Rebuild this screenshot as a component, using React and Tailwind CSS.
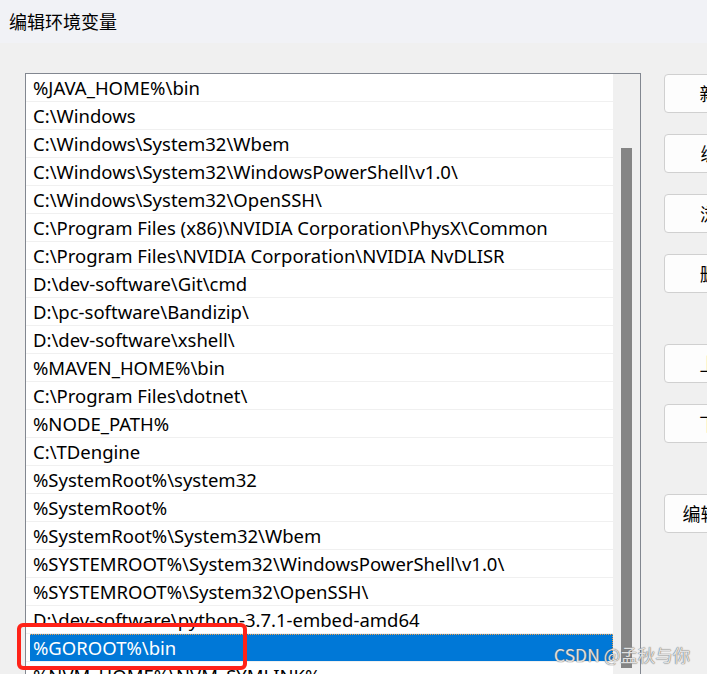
const paths = [
  '%JAVA_HOME%\\bin',
  'C:\\Windows',
  'C:\\Windows\\System32\\Wbem',
  'C:\\Windows\\System32\\WindowsPowerShell\\v1.0\\',
  'C:\\Windows\\System32\\OpenSSH\\',
  'C:\\Program Files (x86)\\NVIDIA Corporation\\PhysX\\Common',
  'C:\\Program Files\\NVIDIA Corporation\\NVIDIA NvDLISR',
  'D:\\dev-software\\Git\\cmd',
  'D:\\pc-software\\Bandizip\\',
  'D:\\dev-software\\xshell\\',
  '%MAVEN_HOME%\\bin',
  'C:\\Program Files\\dotnet\\',
  '%NODE_PATH%',
  'C:\\TDengine',
  '%SystemRoot%\\system32',
  '%SystemRoot%',
  '%SystemRoot%\\System32\\Wbem',
  '%SYSTEMROOT%\\System32\\WindowsPowerShell\\v1.0\\',
  '%SYSTEMROOT%\\System32\\OpenSSH\\',
  'D:\\dev-software\\python-3.7.1-embed-amd64',
  '%GOROOT%\\bin',
  '%NVM_HOME%\\NVM_SYMLINK%',
]

const buttons = [
  { label: '新建(N)', gap: '' },
  { label: '编辑(E)', gap: 'mt-[21px]' },
  { label: '浏览(B)', gap: 'mt-[21px]' },
  { label: '删除(D)', gap: 'mt-[21px]' },
  { label: '上移(U)', gap: 'mt-[51px]' },
  { label: '下移(O)', gap: 'mt-[21px]' },
  { label: '编辑文本(T)', gap: 'mt-[51px]' },
]

export default function App() {
  return (
    <div className="relative w-[707px] h-[674px] overflow-hidden bg-[#f0f0f0] font-['Noto_Sans','Noto_Sans_CJK_SC',sans-serif]">
      <div className="h-[43px] bg-[#f1f2f6] flex items-center pl-[9px] text-[18px] text-black font-['Noto_Sans_CJK_SC',sans-serif]">
        编辑环境变量
      </div>

      <div className="flex pt-[30px] pl-[25px]">
        <div className="w-[616px] h-[640px] shrink-0 border border-[#828790] bg-white flex">
          <div className="w-[587px] flex flex-col">
            {paths.map((p, i) => {
              const selected = i === 20
              return (
                <div key={i} className="h-[28px] shrink-0 border-b border-[#f0f0f0] flex">
                  <div
                    className={
                      selected
                        ? 'flex-1 ml-[4px] pl-[3px] pt-[1px] flex items-center bg-[#0078d7] text-white border-t border-r border-dotted border-[#e8a050] text-[18.5px] leading-none whitespace-nowrap'
                        : 'flex-1 pl-[7px] pt-[2px] flex items-center text-black text-[18.5px] leading-none whitespace-nowrap'
                    }
                  >
                    {p}
                  </div>
                </div>
              )
            })}
          </div>
          <div className="w-[27px] bg-[#f0f0f0] pl-[8px] pt-[74px]">
            <div className="w-[11px] h-[520px] bg-[#858585]" />
          </div>
        </div>

        <div className="ml-[23px] pt-[1px] flex flex-col shrink-0">
          {buttons.map((b) => (
            <div
              key={b.label}
              className={`${b.gap} w-[132px] h-[39px] rounded-[4px] border border-[#d0d0d0] bg-[#fdfdfd] flex items-center justify-center text-[18px] text-black whitespace-nowrap font-['Noto_Sans_CJK_SC',sans-serif]`}
            >
              {b.label}
            </div>
          ))}
        </div>
      </div>

      <div className="absolute left-[17px] top-[623px] w-[230px] h-[47px] border-[4px] border-[#ff2218] rounded-[6px]" />

      <div className="absolute left-[554px] top-[642px] text-[17.5px] text-white/80 whitespace-nowrap [text-shadow:0_0_1px_#666,0_0_1px_#666] font-['Noto_Sans_CJK_SC',sans-serif]">
        CSDN @孟秋与你
      </div>
    </div>
  )
}
